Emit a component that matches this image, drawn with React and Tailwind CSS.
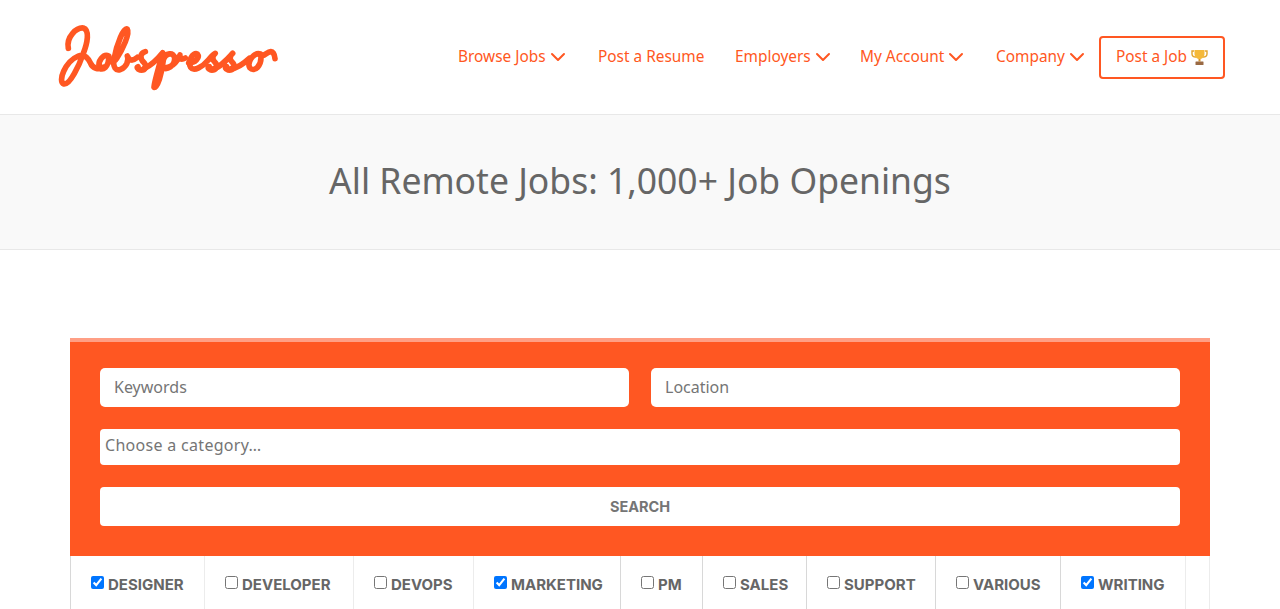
import React from "react";
import { ChevronDown } from "lucide-react";

const fontBody = "font-['Noto_Sans',sans-serif]";

const navItems = [
  { label: "Browse Jobs", width: "w-[140px]", caret: true },
  { label: "Post a Resume", width: "w-[137px]" },
  { label: "Employers", width: "w-[125px]", caret: true },
  { label: "My Account", width: "w-[136px]", caret: true },
  { label: "Company", width: "w-[103px]", caret: true },
];

const filters = [
  { label: "DESIGNER", width: "w-[134px]", border: "border-[#ececec]", checked: true },
  { label: "DEVELOPER", width: "w-[149px]", border: "border-[#ececec]" },
  { label: "DEVOPS", width: "w-[120px]", border: "border-[#ececec]" },
  { label: "MARKETING", width: "w-[147px]", border: "border-[#d8d8d8]", checked: true },
  { label: "PM", width: "w-[82px]", border: "border-[#d8d8d8]" },
  { label: "SALES", width: "w-[104px]", border: "border-[#d8d8d8]" },
  { label: "SUPPORT", width: "w-[129px]", border: "border-[#d8d8d8]" },
  { label: "VARIOUS", width: "w-[125px]", border: "border-[#d8d8d8]" },
  { label: "WRITING", width: "w-[125px]", border: "border-[#ececec]", checked: true },
];

const Logo = () => (
  <svg width="260" height="95" viewBox="0 0 780 285" fill="none" stroke="#ff5722" strokeWidth="17" strokeLinecap="round" strokeLinejoin="round">
    <path d="M85 115C78 80 110 52 130 54C150 60 142 100 130 130C118 165 90 225 72 222C52 215 75 155 115 138C135 130 145 145 152 160C158 175 175 180 190 172" />
    <path d="M206 138C190 130 172 155 178 172C186 186 208 170 206 138C210 160 220 160 230 145C248 118 270 70 262 58C252 50 230 100 222 148C218 172 228 184 242 178C258 172 268 152 262 138C268 155 280 152 292 142" />
    <path d="M316 125C300 130 298 145 312 158C322 170 316 182 300 180C292 178 290 172 294 170" />
    <path d="M312 176C335 165 352 148 368 128C358 168 340 225 342 232C352 235 366 190 370 150C376 128 402 125 404 145C404 168 382 182 366 172C390 178 410 160 420 135C418 148 424 150 436 144" />
    <path d="M446 158C466 160 480 142 472 132C458 126 442 155 452 172C462 186 488 170 505 150C512 142 518 134 526 130C514 140 518 150 526 158C536 170 526 182 512 180C504 178 502 172 508 170" />
    <path d="M520 176C540 172 560 150 578 130C566 142 570 150 578 158C588 170 578 182 564 180C556 178 554 172 560 170" />
    <path d="M574 176C592 174 612 160 628 145" />
    <path d="M662 132C638 126 620 160 630 174C642 188 668 168 662 132C668 145 680 125 692 125C700 126 704 136 705 146" />
  </svg>
);

const Trophy = () => (
  <svg width="17" height="17" viewBox="0 0 17 17" className="ml-1">
    <path d="M3 2H1v3c0 2 2 3 4 3M14 2h2v3c0 2-2 3-4 3" fill="none" stroke="#e2a32c" strokeWidth="1.4" />
    <path d="M3.5 1h10v4c0 3-2.5 5-5 5s-5-2-5-5z" fill="#f5b93a" />
    <rect x="7.5" y="10" width="2" height="2.5" fill="#d9952a" />
    <rect x="4.5" y="12.5" width="8" height="3.5" rx="0.5" fill="#9a6a44" />
  </svg>
);

const fieldClass =
  "block h-[39px] w-full rounded-[5px] bg-white px-[14px] pb-[2px] text-base text-[#757575] placeholder:text-[#757575] outline-none";

const App = () => {
  return (
    <div className={`h-[609px] overflow-hidden bg-white ${fontBody}`}>
      <header className="flex h-[115px] items-center justify-between border-b border-[#e8e8e8] pl-[40px] pr-[55px]">
        <Logo />
        <nav className="flex items-center text-[15.4px] text-[#ff5722]">
          {navItems.map((item) => (
            <a key={item.label} href="#" className={`flex items-center whitespace-nowrap ${item.width}`}>
              {item.label}
              {item.caret && <ChevronDown size={24} strokeWidth={2} className="-my-1 shrink-0" />}
            </a>
          ))}
          <a href="#" className="flex h-[43px] w-[126px] items-center justify-center whitespace-nowrap rounded-[4px] border-2 border-[#ff5722]">
            Post a Job
            <Trophy />
          </a>
        </nav>
      </header>

      <section className="flex h-[135px] items-center justify-center border-b border-[#e8e8e8] bg-[#f9f9f9] pb-[2px]">
        <h1 className="text-[35.5px] font-normal leading-none text-[#666666]">All Remote Jobs: 1,000+ Job Openings</h1>
      </section>

      <main className="mx-[70px] mt-[88px]">
        <form className="border-t-4 border-[#ff9f85] bg-[#ff5722] px-[30px] pb-[30px] pt-[26px]">
          <div className="flex gap-[22px]">
            <input className={fieldClass} placeholder="Keywords" />
            <input className={fieldClass} placeholder="Location" />
          </div>
          <div className="mt-[22px] flex h-[36px] items-center rounded-[4px] bg-white px-[5px] pb-[4px] text-base tracking-[0.3px] text-[#757575]">
            Choose a category…
          </div>
          <button type="button" className="mt-[22px] block h-[39px] w-full rounded-[4px] bg-white font-['Inter',sans-serif] text-[14.5px] font-bold text-[#757575]">
            SEARCH
          </button>
        </form>

        <ul className="flex h-[60px] border-l border-r border-l-[#d8d8d8] border-r-[#ececec] font-['Inter',sans-serif] text-[15px] font-bold text-[#666666]">
          {filters.map((filter) => (
            <li key={filter.label} className={`flex shrink-0 items-start border-r pl-5 pt-[20px] ${filter.width} ${filter.border}`}>
              <label className="flex items-start whitespace-nowrap">
                <input type="checkbox" defaultChecked={filter.checked} className="mr-[4px] h-[13px] w-[13px]" />
                <span className="leading-[17px]">{filter.label}</span>
              </label>
            </li>
          ))}
        </ul>
      </main>
    </div>
  );
};

export default App;
